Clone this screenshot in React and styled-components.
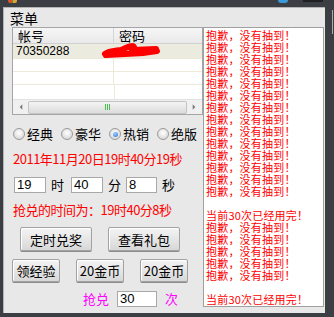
import React from "react";
import styled, { createGlobalStyle } from "styled-components";

const GlobalStyle = createGlobalStyle`
  html, body {
    margin: 0;
    padding: 0;
    background: #3b3e43;
  }
  * {
    box-sizing: border-box;
  }
`;

const cjk = `"Noto Sans CJK SC", "Liberation Sans", sans-serif`;

const rounds = [
  ...Array(14).fill("抱歉，没有抽到！"),
  "",
  "当前30次已经用完！",
  ...Array(5).fill("抱歉，没有抽到！"),
  "",
  "当前30次已经用完！",
];

const App = () => {
  return (
    <>
      <GlobalStyle />
      <Window>
        <TopBar>
          <AppIcon />
          <TopSpacer />
          <BlueKnob />
          <DarkTab />
        </TopBar>
        <Frame>
          <Panel>
            <MenuTitle>菜单</MenuTitle>
            <Body>
              <LeftColumn>
                <ListView>
                  <ListHeader>
                    <HeaderCell $w={101}>帐号</HeaderCell>
                    <HeaderCell>密码</HeaderCell>
                  </ListHeader>
                  <ListRow $selected>
                    <Cell $w={101}>70350288</Cell>
                    <Cell>
                      <Scribble viewBox="0 0 60 16">
                        <path
                          d="M4 11 C8 8 14 8 20 7 C24 6 26 3 31 3 C34 3 33 6 31 7 L55 6"
                          stroke="#ff0000"
                          strokeWidth="6"
                          strokeLinecap="round"
                          strokeLinejoin="round"
                          fill="none"
                        />
                        <path d="M5 12 L24 11 L42 10 L56 8" stroke="#ff0000" strokeWidth="6" strokeLinecap="round" fill="none" />
                      </Scribble>
                    </Cell>
                  </ListRow>
                  <ListRow>
                    <Cell $w={101} />
                    <Cell />
                  </ListRow>
                  <ListRow>
                    <Cell $w={101} />
                    <Cell />
                  </ListRow>
                  <ListFill />
                  <HScroll>
                    <ArrowBtn>
                      <Tri viewBox="0 0 6 8">
                        <path d="M5 0 L1 4 L5 8 Z" fill="#7a7a7a" />
                      </Tri>
                    </ArrowBtn>
                    <Track>
                      <Thumb>
                        <Grip>
                          <i />
                          <i />
                          <i />
                        </Grip>
                      </Thumb>
                    </Track>
                    <ArrowBtn>
                      <Tri viewBox="0 0 6 8">
                        <path d="M1 0 L5 4 L1 8 Z" fill="#7a7a7a" />
                      </Tri>
                    </ArrowBtn>
                  </HScroll>
                </ListView>

                <RadioRow>
                  {["经典", "豪华", "热销", "绝版"].map((t, i) => (
                    <RadioItem key={t}>
                      <RadioDot $checked={i === 2} />
                      <span>{t}</span>
                    </RadioItem>
                  ))}
                </RadioRow>

                <RedLine $top={10}>2011年11月20日19时40分19秒</RedLine>

                <InputRow>
                  <Field $w={32}>19</Field>
                  <Unit $w={25}>时</Unit>
                  <Field $w={32}>40</Field>
                  <Unit $w={23}>分</Unit>
                  <Field $w={31}>8</Field>
                  <Unit $w={20}>秒</Unit>
                </InputRow>

                <RedLine $top={9}>抢兑的时间为：19时40分8秒</RedLine>

                <ButtonRow $top={9} $pad={8}>
                  <Button $w={72} $h={24}>定时兑奖</Button>
                  <Button $w={72} $h={24}>查看礼包</Button>
                </ButtonRow>

                <ButtonRow $top={8} $pad={0}>
                  <Button $w={48} $h={23}>领经验</Button>
                  <Button $w={48} $h={23}>20金币</Button>
                  <Button $w={48} $h={23}>20金币</Button>
                </ButtonRow>

                <CountRow>
                  <Pink>抢兑</Pink>
                  <Field $w={40}>30</Field>
                  <Pink>次</Pink>
                </CountRow>
              </LeftColumn>

              <LogBox>
                {rounds.map((line, i) => (
                  <LogLine key={i}>{line}</LogLine>
                ))}
              </LogBox>
            </Body>
          </Panel>
          <SideStrip />
        </Frame>
      </Window>
    </>
  );
};

const Window = styled.div`
  width: 334px;
  height: 317px;
  background: #3b3e43;
  display: flex;
  flex-direction: column;
  overflow: hidden;
`;

const TopBar = styled.div`
  height: 7px;
  display: flex;
  align-items: flex-start;
  padding-left: 8px;
`;

const AppIcon = styled.div`
  width: 9px;
  height: 3px;
  background: linear-gradient(90deg, #e0502a 0 45%, #3aa04a 45% 60%, #e8a030 60%);
  border-radius: 0 0 2px 2px;
`;

const TopSpacer = styled.div`
  flex: 1;
`;

const BlueKnob = styled.div`
  width: 10px;
  height: 3px;
  background: #3a9ad8;
  border-radius: 0 0 3px 3px;
  margin-right: 15px;
`;

const DarkTab = styled.div`
  width: 20px;
  height: 2px;
  background: #1e2024;
  margin-right: 11px;
`;

const Frame = styled.div`
  display: flex;
  height: 306px;
  padding-left: 3px;
`;

const Panel = styled.div`
  width: 322px;
  height: 306px;
  background: #e8e8e8;
  border-top: 1px solid #b4b4b4;
  border-left: 1px solid #b4b4b4;
  padding: 2px 0 0 8px;
  display: flex;
  flex-direction: column;
`;

const SideStrip = styled.div`
  width: 1px;
  height: 24px;
  margin: 3px 0 0 7px;
  background: #a8aaae;
`;

const MenuTitle = styled.div`
  font-family: ${cjk};
  font-size: 14px;
  line-height: 16px;
  height: 16px;
  color: #000;
  margin-left: -2px;
`;

const Body = styled.div`
  display: flex;
  margin-top: 1px;
`;

const LeftColumn = styled.div`
  width: 191px;
  display: flex;
  flex-direction: column;
`;

const ListView = styled.div`
  height: 88px;
  background: #fff;
  border: 1px solid #a5a5a5;
  display: flex;
  flex-direction: column;
`;

const ListHeader = styled.div`
  height: 16px;
  display: flex;
  background: linear-gradient(#f6f6f6, #e9e9e9);
  border-bottom: 1px solid #d0d0d0;
`;

const HeaderCell = styled.div`
  width: ${(p) => (p.$w ? `${p.$w}px` : "auto")};
  flex: ${(p) => (p.$w ? "none" : "1")};
  border-right: ${(p) => (p.$w ? "1px solid #d6d6d6" : "none")};
  font-family: ${cjk};
  font-size: 13px;
  line-height: 15px;
  padding-left: 5px;
  color: #000;
`;

const ListRow = styled.div`
  height: 13px;
  display: flex;
  background: ${(p) => (p.$selected ? "#ecebdf" : "#fff")};
  border-bottom: 1px solid #ece9d8;
  &:nth-child(2) {
    height: 15px;
  }
`;

const Cell = styled.div`
  width: ${(p) => (p.$w ? `${p.$w}px` : "auto")};
  flex: ${(p) => (p.$w ? "none" : "1")};
  border-right: ${(p) => (p.$w ? "1px solid #ece9d8" : "none")};
  font-family: "Liberation Sans", sans-serif;
  font-size: 12px;
  line-height: 15px;
  padding-left: 3px;
  color: #000;
  position: relative;
`;

const Scribble = styled.svg`
  position: absolute;
  left: -13px;
  top: -1px;
  width: 60px;
  height: 16px;
`;

const ListFill = styled.div`
  flex: 1;
  display: flex;
  &::before {
    content: "";
    width: 101px;
    border-right: 1px solid #ece9d8;
  }
`;

const HScroll = styled.div`
  height: 15px;
  display: flex;
  align-items: center;
  background: #f0f0f0;
  border-top: 1px solid #e2e2e2;
  padding: 0 2px;
`;

const ArrowBtn = styled.div`
  width: 12px;
  height: 13px;
  display: flex;
  align-items: center;
  justify-content: center;
`;

const Tri = styled.svg`
  width: 4px;
  height: 6px;
`;

const Track = styled.div`
  flex: 1;
  height: 13px;
  padding: 0 1px;
  display: flex;
`;

const Thumb = styled.div`
  flex: 1;
  border: 1px solid #c4c4c4;
  border-radius: 2px;
  background: linear-gradient(#f4f4f4, #dcdcdc);
  display: flex;
  justify-content: center;
  align-items: center;
`;

const Grip = styled.div`
  display: flex;
  gap: 1px;
  i {
    width: 1px;
    height: 6px;
    background: #4cc04c;
  }
`;

const RadioRow = styled.div`
  margin-top: 12px;
  height: 14px;
  display: flex;
  padding-left: 1px;
`;

const RadioItem = styled.label`
  width: 48px;
  flex: none;
  display: flex;
  align-items: center;
  gap: 2px;
  font-family: ${cjk};
  font-size: 13px;
  line-height: 14px;
  color: #000;
  white-space: nowrap;
`;

const RadioDot = styled.span`
  width: 12px;
  height: 12px;
  border-radius: 50%;
  border: 1px solid #9a9a9a;
  background: radial-gradient(circle at 50% 40%, #ffffff, #d8d8d8 80%);
  display: flex;
  align-items: center;
  justify-content: center;
  flex: none;
  &::after {
    content: "";
    width: 5px;
    height: 5px;
    border-radius: 50%;
    background: ${(p) => (p.$checked ? "radial-gradient(circle at 40% 35%, #9fd0ff, #2a6fd6)" : "transparent")};
  }
`;

const RedLine = styled.div`
  margin-top: ${(p) => p.$top}px;
  height: 16px;
  font-family: ${cjk};
  font-size: 13px;
  letter-spacing: -0.5px;
  line-height: 16px;
  color: #ff0000;
  padding-left: 1px;
  white-space: nowrap;
`;

const InputRow = styled.div`
  margin-top: 10px;
  height: 16px;
  display: flex;
  align-items: center;
  padding-left: 2px;
`;

const Field = styled.div`
  width: ${(p) => p.$w}px;
  height: 16px;
  flex: none;
  background: #fff;
  border: 1px solid #a8a8a8;
  font-family: "Liberation Sans", sans-serif;
  font-size: 13px;
  line-height: 14px;
  padding-left: 2px;
  color: #000;
`;

const Unit = styled.div`
  width: ${(p) => p.$w}px;
  padding-left: 5px;
  font-family: ${cjk};
  font-size: 13px;
  line-height: 16px;
  color: #000;
`;

const ButtonRow = styled.div`
  margin-top: ${(p) => p.$top}px;
  display: flex;
  gap: 16px;
  padding-left: ${(p) => p.$pad}px;
`;

const Button = styled.button`
  width: ${(p) => p.$w}px;
  height: ${(p) => p.$h}px;
  padding: 0;
  border: 1px solid #a2a2a2;
  border-radius: 2px;
  background: linear-gradient(#f4f4f4, #e6e6e6 50%, #d8d8d8);
  box-shadow: inset 1px 1px 0 #ffffff, 0 1px 0 #8c8c8c;
  font-family: ${cjk};
  font-size: 13px;
  color: #000;
  white-space: nowrap;
`;

const CountRow = styled.div`
  margin-top: 9px;
  height: 16px;
  display: flex;
  align-items: center;
  padding-left: 71px;
  gap: 8px;
`;

const Pink = styled.div`
  font-family: ${cjk};
  font-size: 13px;
  line-height: 16px;
  color: #ff00ff;
`;

const LogBox = styled.div`
  width: 121px;
  height: 280px;
  margin-left: 0;
  background: #fff;
  border: 1px solid #a0a0a0;
  padding: 1px 0 0 2px;
  overflow: hidden;
`;

const LogLine = styled.div`
  height: 12px;
  font-family: ${cjk};
  font-size: 11px;
  letter-spacing: 0.2px;
  line-height: 12px;
  color: #ff0000;
  white-space: nowrap;
`;

export default App;
